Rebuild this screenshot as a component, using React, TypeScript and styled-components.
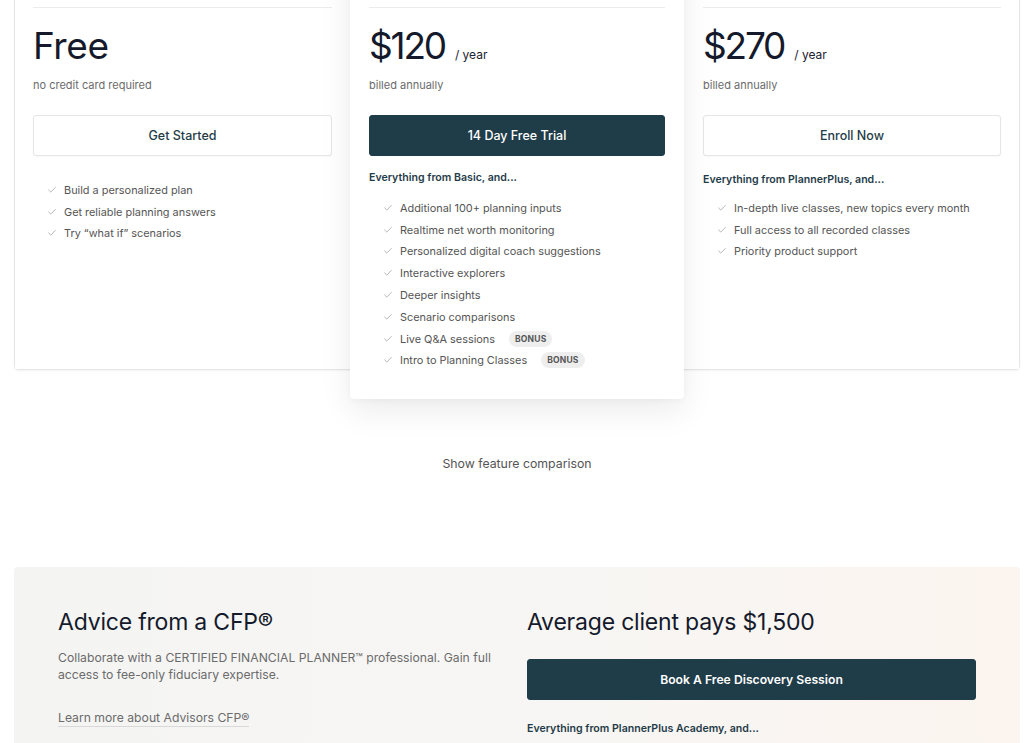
import React from "react";
import styled, { createGlobalStyle } from "styled-components";
import { Check } from "lucide-react";

const Global = createGlobalStyle`
  html, body { margin: 0; padding: 0; background: #ffffff; }
  body { font-family: Inter, "Noto Sans", Arial, sans-serif; color: #1b2230; -webkit-font-smoothing: antialiased; }
  * { box-sizing: border-box; }
`;

const Page = styled.div`
  padding: 0 4px 0 14px;
  overflow: hidden;
  height: 743px;
`;

const PlansCard = styled.div`
  margin-top: -40px;
  display: grid;
  grid-template-columns: 335px 334px 335px;
  border: 1px solid #e6e6e6;
  border-radius: 4px;
  box-shadow: 0 1px 2px rgba(0, 0, 0, 0.05);
  background: #fff;
  width: 1006px;
`;

const Column = styled.div<{ $featured?: boolean; $side?: "left" | "right" }>`
  display: flex;
  flex-direction: column;
  padding: ${(p) =>
    p.$featured ? "62px 19px 28px" : p.$side === "left" ? "46px 18px 20px 18px" : "46px 18px 20px 19px"};
  background: #fff;
  ${(p) =>
    p.$featured &&
    `
    margin: -16px 0 -30px;
    box-shadow: 0 12px 32px rgba(0, 0, 0, 0.08), 0 2px 6px rgba(0,0,0,0.03);
    border-radius: 4px;
    position: relative;
    z-index: 1;
  `}
`;

const Divider = styled.div`
  height: 1px;
  background: #ececec;
`;

const PriceRow = styled.div`
  display: flex;
  align-items: baseline;
  gap: 10px;
  margin-top: 15px;
  height: 46px;
`;

const Price = styled.span<{ $numeric?: boolean }>`
  font-size: 37px;
  font-weight: 400;
  letter-spacing: ${(p) => (p.$numeric ? "-2.2px" : "-0.4px")};
  color: #141a2b;
  line-height: 46px;
`;

const Period = styled.span`
  font-size: 12px;
  color: #1b2230;
`;

const Note = styled.div`
  font-size: 11px;
  color: #6b6b6b;
  margin-top: 9px;
  line-height: 14px;
`;

const Button = styled.button<{ $primary?: boolean }>`
  margin-top: 23px;
  height: 41px;
  width: 100%;
  border-radius: 3px;
  font-family: inherit;
  font-size: 12.5px;
  font-weight: 500;
  cursor: pointer;
  border: 1px solid ${(p) => (p.$primary ? "#1f3c49" : "#e6e6e6")};
  background: ${(p) => (p.$primary ? "#1f3c49" : "#fff")};
  color: ${(p) => (p.$primary ? "#fff" : "#1f3c49")};
  box-shadow: ${(p) => (p.$primary ? "none" : "0 1px 2px rgba(0,0,0,0.03)")};
`;

const ListHeader = styled.div<{ $gap?: number }>`
  font-size: 10.6px;
  font-weight: 600;
  color: #1f3c49;
  margin-top: ${(p) => p.$gap ?? 15}px;
  line-height: 14px;
`;

const List = styled.ul<{ $gap: number }>`
  list-style: none;
  margin: ${(p) => p.$gap}px 0 0;
  padding: 0 0 0 14px;
`;

const Item = styled.li`
  display: flex;
  align-items: center;
  height: 21.8px;
  font-size: 10.9px;
  color: #555;
  gap: 7px;
`;

const Badge = styled.span`
  font-size: 8.5px;
  font-weight: 700;
  letter-spacing: 0.2px;
  color: #555;
  background: #eeeeee;
  border-radius: 9px;
  padding: 3px 6px;
  margin-left: 7px;
`;

const CheckIcon = () => <Check size={10} strokeWidth={1.5} color="#8a8a8a" />;

const Compare = styled.div`
  text-align: center;
  margin: 86px 0 0;
  font-size: 12.3px;
  color: #555;
  line-height: 16px;
  width: 1006px;
`;

const Advisor = styled.section`
  margin-top: 95px;
  width: 1006px;
  border-radius: 4px;
  background: linear-gradient(90deg, #f4f4f3 0%, #f7f6f4 50%, #fbf4ef 100%);
  padding: 40px 44px 40px;
  display: grid;
  grid-template-columns: 449px 449px;
  column-gap: 20px;
`;

const AdvCol = styled.div`
  display: flex;
  flex-direction: column;
`;

const AdvTitle = styled.h2`
  margin: 0;
  font-size: 23px;
  font-weight: 400;
  line-height: 30px;
  color: #141a2b;
  letter-spacing: -0.2px;
`;

const AdvText = styled.p`
  margin: 12px 0 0;
  font-size: 12.2px;
  line-height: 17px;
  color: #6b6b6b;
`;

const AdvLink = styled.a`
  margin-top: 27px;
  font-size: 12.2px;
  color: #6b6b6b;
  text-decoration: none;
  border-bottom: 1px solid #d8d8d8;
  align-self: flex-start;
  line-height: 16px;
`;

const AdvButton = styled(Button)`
  margin-top: 22px;
  height: 41px;
  font-size: 12.2px;
  font-weight: 600;
`;

const App: React.FC = () => {
  return (
    <Page>
      <Global />
      <PlansCard>
        <Column $side="left">
          <Divider />
          <PriceRow>
            <Price>Free</Price>
          </PriceRow>
          <Note>no credit card required</Note>
          <Button>Get Started</Button>
          <List $gap={23}>
            {["Build a personalized plan", "Get reliable planning answers", "Try “what if” scenarios"].map((t) => (
              <Item key={t}>
                <CheckIcon />
                {t}
              </Item>
            ))}
          </List>
        </Column>
        <Column $featured>
          <Divider />
          <PriceRow>
            <Price $numeric>$120</Price>
            <Period>/ year</Period>
          </PriceRow>
          <Note>billed annually</Note>
          <Button $primary>14 Day Free Trial</Button>
          <ListHeader>Everything from Basic, and...</ListHeader>
          <List $gap={12}>
            {[
              "Additional 100+ planning inputs",
              "Realtime net worth monitoring",
              "Personalized digital coach suggestions",
              "Interactive explorers",
              "Deeper insights",
              "Scenario comparisons",
            ].map((t) => (
              <Item key={t}>
                <CheckIcon />
                {t}
              </Item>
            ))}
            <Item>
              <CheckIcon />
              Live Q&amp;A sessions
              <Badge>BONUS</Badge>
            </Item>
            <Item>
              <CheckIcon />
              Intro to Planning Classes
              <Badge>BONUS</Badge>
            </Item>
          </List>
        </Column>
        <Column $side="right">
          <Divider />
          <PriceRow>
            <Price $numeric>$270</Price>
            <Period>/ year</Period>
          </PriceRow>
          <Note>billed annually</Note>
          <Button>Enroll Now</Button>
          <ListHeader $gap={17}>Everything from PlannerPlus, and...</ListHeader>
          <List $gap={10}>
            {[
              "In-depth live classes, new topics every month",
              "Full access to all recorded classes",
              "Priority product support",
            ].map((t) => (
              <Item key={t}>
                <CheckIcon />
                {t}
              </Item>
            ))}
          </List>
        </Column>
      </PlansCard>
      <Compare>Show feature comparison</Compare>
      <Advisor>
        <AdvCol>
          <AdvTitle>Advice from a CFP®</AdvTitle>
          <AdvText>
            Collaborate with a CERTIFIED FINANCIAL PLANNER™ professional. Gain full access to fee-only fiduciary
            expertise.
          </AdvText>
          <AdvLink href="#">Learn more about Advisors CFP®</AdvLink>
        </AdvCol>
        <AdvCol>
          <AdvTitle>Average client pays $1,500</AdvTitle>
          <AdvButton $primary>Book A Free Discovery Session</AdvButton>
          <ListHeader $gap={22}>Everything from PlannerPlus Academy, and...</ListHeader>
        </AdvCol>
      </Advisor>
    </Page>
  );
};

export default App;
